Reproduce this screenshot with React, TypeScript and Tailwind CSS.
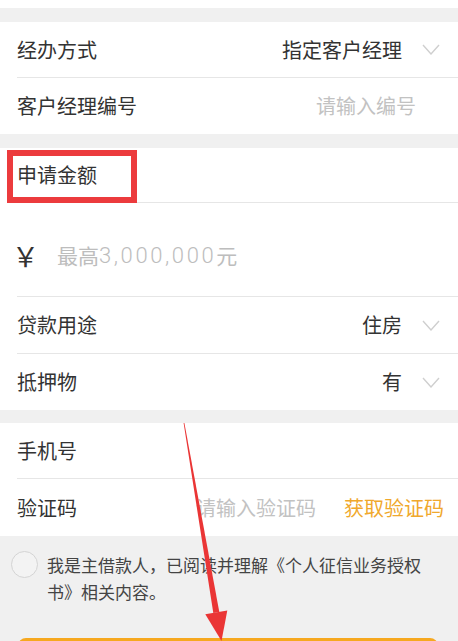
import type { ReactNode } from "react";

const font = { fontFamily: '"Noto Sans CJK SC", "Noto Sans", sans-serif' };

function Chevron() {
  return (
    <svg width="18" height="11" viewBox="0 0 18 11" className="shrink-0">
      <polyline points="1,1 9,10 17,1" fill="none" stroke="#cfcfcf" strokeWidth="1.4" />
    </svg>
  );
}

function Row({
  label,
  children,
  last,
  className = "",
}: {
  label: string;
  children?: ReactNode;
  last?: boolean;
  className?: string;
}) {
  return (
    <div
      className={`ml-[17px] flex h-[56px] items-center justify-between ${
        last ? "" : "border-b border-[#e6e6e6]"
      } ${className}`}
    >
      <span className="text-[20px] text-[#333]">{label}</span>
      {children}
    </div>
  );
}

function SelectValue({ value }: { value: string }) {
  return (
    <div className="flex items-center gap-[20px] pr-[18px]">
      <span className="text-[20px] text-[#333]">{value}</span>
      <Chevron />
    </div>
  );
}

export default function App() {
  return (
    <div className="relative h-[641px] w-[458px] overflow-hidden bg-[#f0f0f0]" style={font}>
      <div className="h-[8px] bg-white" />
      <div className="h-[14px]" />

      {/* handling */}
      <div className="bg-white">
        <Row label="经办方式">
          <SelectValue value="指定客户经理" />
        </Row>
        <Row label="客户经理编号" last>
          <span className="pr-[42px] text-[20px] text-[#c2c2c2]">请输入编号</span>
        </Row>
      </div>

      <div className="h-[14px]" />

      {/* amount */}
      <div className="bg-white">
        <div className="ml-[17px] flex h-[55px] items-center border-b border-[#e6e6e6]">
          <span className="text-[20px] text-[#333]">申请金额</span>
        </div>
        <div className="ml-[17px] flex h-[94px] items-center border-b border-[#e6e6e6] pt-[12px]">
          <span className="-ml-[5px] w-[45px] text-[27px] leading-none text-[#333]">￥</span>
          <span className="flex items-center text-[21px] text-[#bdbdbd]">
            最高
            <span className="font-light tracking-[2.6px] text-[22px]" style={{ fontFamily: "Roboto, sans-serif" }}>
              3,000,000
            </span>
            元
          </span>
        </div>
        <Row label="贷款用途" className="h-[57px]">
          <SelectValue value="住房" />
        </Row>
        <Row label="抵押物" last>
          <SelectValue value="有" />
        </Row>
      </div>

      <div className="h-[13px]" />

      {/* verification */}
      <div className="bg-white">
        <Row label="手机号" />
        <Row label="验证码" last className="h-[57px]">
          <div className="flex items-center gap-[28px] pr-[14px]">
            <span className="text-[20px] text-[#c2c2c2]">请输入验证码</span>
            <span className="text-[20px] text-[#f0a82c]">获取验证码</span>
          </div>
        </Row>
      </div>

      {/* agreement */}
      <div className="flex items-start gap-[9px] pl-[11px] pt-[15px]">
        <div className="h-[27px] w-[27px] shrink-0 rounded-full border-[1.5px] border-[#d4d4d4] bg-[#f3f3f3]" />
        <p className="w-[385px] text-[17px] leading-[27px] text-[#444]">
          我是主借款人，已阅读并理解《个人征信业务授权书》相关内容。
        </p>
      </div>

      <div className="mx-[18px] mt-[33px] h-[48px] w-[420px] rounded-[8px] bg-[#f6a81f]" />

      {/* annotations */}
      <div className="absolute left-[7px] top-[150px] h-[53px] w-[130px] border-[6px] border-[#ec3b3d]" />
      <svg className="pointer-events-none absolute left-0 top-0" width="458" height="641" viewBox="0 0 458 641">
        <polygon
          points="183.6,423 184.4,422.9 219.3,612 213.3,613"
          fill="#ea3535"
        />
        <polygon points="205.3,614.3 227.3,610.5 221.5,641" fill="#ea3535" />
      </svg>
    </div>
  );
}
